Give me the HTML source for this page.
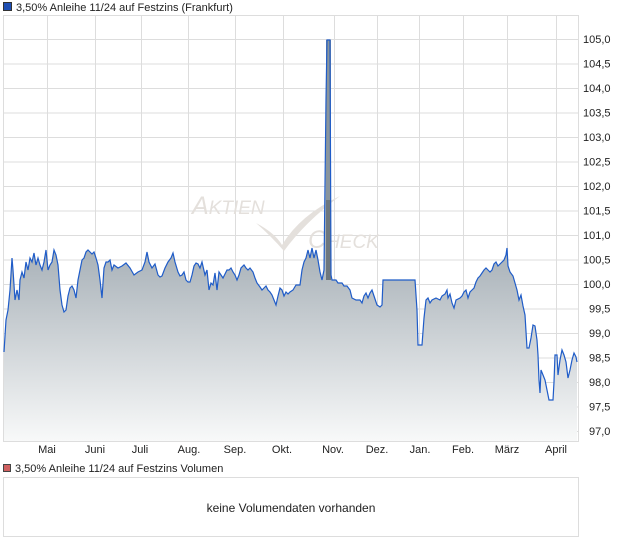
<!DOCTYPE html><html><head><meta charset="utf-8"><style>
body{margin:0;background:#fff;width:620px;height:546px;overflow:hidden;font-family:"Liberation Sans",sans-serif}
svg{position:absolute;left:0;top:0}
</style></head><body>
<svg width="620" height="546" xmlns="http://www.w3.org/2000/svg" font-family="Liberation Sans, sans-serif">
<defs>
<linearGradient id="f" x1="0" y1="250" x2="0" y2="441" gradientUnits="userSpaceOnUse"><stop offset="0" stop-color="#a8b1b8"/><stop offset="1" stop-color="#f8f9f9"/></linearGradient></defs>
<rect x="3.5" y="2.5" width="8" height="8" fill="#1f4fb4" stroke="#333" stroke-width="1"/>
<text x="16" y="11" font-size="11" fill="#222">3,50% Anleihe 11/24 auf Festzins (Frankfurt)</text>
<rect x="3.5" y="15.5" width="575" height="426" fill="#fff" stroke="#ddd"/>
<g stroke="#ddd" stroke-width="1">
<line x1="47.5" y1="16" x2="47.5" y2="441"/><line x1="95.5" y1="16" x2="95.5" y2="441"/><line x1="141.5" y1="16" x2="141.5" y2="441"/><line x1="188.5" y1="16" x2="188.5" y2="441"/><line x1="235.5" y1="16" x2="235.5" y2="441"/><line x1="283.5" y1="16" x2="283.5" y2="441"/><line x1="334.5" y1="16" x2="334.5" y2="441"/><line x1="377.5" y1="16" x2="377.5" y2="441"/><line x1="419.5" y1="16" x2="419.5" y2="441"/><line x1="463.5" y1="16" x2="463.5" y2="441"/><line x1="507.5" y1="16" x2="507.5" y2="441"/><line x1="556.5" y1="16" x2="556.5" y2="441"/>
<line x1="3" y1="39.5" x2="578" y2="39.5"/><line x1="3" y1="64" x2="578" y2="64"/><line x1="3" y1="88.5" x2="578" y2="88.5"/><line x1="3" y1="113" x2="578" y2="113"/><line x1="3" y1="137.5" x2="578" y2="137.5"/><line x1="3" y1="162" x2="578" y2="162"/><line x1="3" y1="186.5" x2="578" y2="186.5"/><line x1="3" y1="211" x2="578" y2="211"/><line x1="3" y1="235.5" x2="578" y2="235.5"/><line x1="3" y1="260" x2="578" y2="260"/><line x1="3" y1="284.5" x2="578" y2="284.5"/><line x1="3" y1="309" x2="578" y2="309"/><line x1="3" y1="333.5" x2="578" y2="333.5"/><line x1="3" y1="358" x2="578" y2="358"/><line x1="3" y1="382.5" x2="578" y2="382.5"/><line x1="3" y1="407" x2="578" y2="407"/><line x1="3" y1="431.5" x2="578" y2="431.5"/>
</g>
<g fill="#e4e0dc" font-style="italic">
<text x="192" y="214" font-size="25">A<tspan font-size="19">KTIEN</tspan></text>
<text x="308" y="248" font-size="25">C<tspan font-size="19">HECK</tspan></text>
<path d="M256 223 Q275 233 282 245 Q300 215 340 196 Q305 222 284 251 Q270 235 256 223Z"/>
</g>
<polygon fill="url(#f)" points="4,441 4,352 6,320 8,310 10,290 12,258 13,270 15,300 17,290 19,300 20,280 22,272 24,278 26,262 28,270 30,258 32,262 34,253 36,265 38,258 40,265 42,270 44,262 46,250 48,270 50,265 52,262 54,250 56,255 58,265 60,290 62,305 64,312 66,310 68,296 70,288 72,286 74,290 76,298 78,280 80,270 82,260 84,258 86,252 88,250 90,252 92,254 94,252 96,258 98,265 100,280 102,298 104,268 106,262 108,262 110,260 112,270 114,265 118,268 122,266 126,263 130,268 134,275 138,272 142,270 145,262 147,252 149,262 152,268 155,264 158,275 160,277 162,276 165,268 168,262 171,258 173,253 175,262 178,272 180,276 182,275 184,272 186,280 188,282 190,282 192,275 194,266 196,263 198,264 200,268 202,262 205,275 207,270 209,290 211,283 213,285 215,273 217,290 219,272 221,275 223,278 225,274 227,270 229,270 231,268 233,272 235,275 237,280 239,275 241,268 244,265 246,268 248,270 250,268 253,272 255,278 257,283 260,287 262,290 264,288 266,286 268,290 270,292 272,295 274,300 276,305 278,296 280,288 282,290 284,296 286,292 288,294 290,292 293,290 296,285 300,285 302,270 304,262 306,258 308,250 310,258 312,248 314,258 316,250 318,260 320,272 322,280 324,270 326,100 327,40 330,40 331,275 332,280 336,280 338,283 342,283 344,286 347,286 350,290 352,298 356,300 360,300 362,303 364,296 366,293 368,298 370,293 372,290 374,296 377,305 380,307 382,305 383,280 415,280 417,310 418,345 422,345 424,318 426,300 428,298 430,303 432,300 436,298 440,300 442,296 445,294 447,290 448,298 450,294 452,303 454,308 456,300 460,298 462,296 464,292 466,290 468,298 470,292 472,290 474,288 476,282 478,278 480,276 482,273 484,270 486,268 488,270 490,272 492,270 494,264 496,262 498,266 500,264 504,260 506,255 507,248 508,266 510,272 513,276 515,283 517,290 519,300 521,295 523,306 525,315 527,348 529,348 531,338 533,325 535,326 537,340 538,355 539,380 540,393 541,370 543,375 545,380 547,390 549,400 553,400 554,382 555,355 557,355 558,375 560,360 562,350 564,355 566,362 568,378 570,370 572,360 574,353 576,357 577,362 577,441"/>
<rect x="326" y="40" width="5" height="240" fill="#8a959c"/>
<rect x="326" y="200" width="5" height="80" fill="#6e777d"/>
<polyline fill="none" stroke="#1f5cc8" stroke-width="1.2" points="4,352 6,320 8,310 10,290 12,258 13,270 15,300 17,290 19,300 20,280 22,272 24,278 26,262 28,270 30,258 32,262 34,253 36,265 38,258 40,265 42,270 44,262 46,250 48,270 50,265 52,262 54,250 56,255 58,265 60,290 62,305 64,312 66,310 68,296 70,288 72,286 74,290 76,298 78,280 80,270 82,260 84,258 86,252 88,250 90,252 92,254 94,252 96,258 98,265 100,280 102,298 104,268 106,262 108,262 110,260 112,270 114,265 118,268 122,266 126,263 130,268 134,275 138,272 142,270 145,262 147,252 149,262 152,268 155,264 158,275 160,277 162,276 165,268 168,262 171,258 173,253 175,262 178,272 180,276 182,275 184,272 186,280 188,282 190,282 192,275 194,266 196,263 198,264 200,268 202,262 205,275 207,270 209,290 211,283 213,285 215,273 217,290 219,272 221,275 223,278 225,274 227,270 229,270 231,268 233,272 235,275 237,280 239,275 241,268 244,265 246,268 248,270 250,268 253,272 255,278 257,283 260,287 262,290 264,288 266,286 268,290 270,292 272,295 274,300 276,305 278,296 280,288 282,290 284,296 286,292 288,294 290,292 293,290 296,285 300,285 302,270 304,262 306,258 308,250 310,258 312,248 314,258 316,250 318,260 320,272 322,280 324,270 326,100 327,40 330,40 331,275 332,280 336,280 338,283 342,283 344,286 347,286 350,290 352,298 356,300 360,300 362,303 364,296 366,293 368,298 370,293 372,290 374,296 377,305 380,307 382,305 383,280 415,280 417,310 418,345 422,345 424,318 426,300 428,298 430,303 432,300 436,298 440,300 442,296 445,294 447,290 448,298 450,294 452,303 454,308 456,300 460,298 462,296 464,292 466,290 468,298 470,292 472,290 474,288 476,282 478,278 480,276 482,273 484,270 486,268 488,270 490,272 492,270 494,264 496,262 498,266 500,264 504,260 506,255 507,248 508,266 510,272 513,276 515,283 517,290 519,300 521,295 523,306 525,315 527,348 529,348 531,338 533,325 535,326 537,340 538,355 539,380 540,393 541,370 543,375 545,380 547,390 549,400 553,400 554,382 555,355 557,355 558,375 560,360 562,350 564,355 566,362 568,378 570,370 572,360 574,353 576,357 577,362"/>
<g font-size="11" fill="#222">
<text x="583" y="43">105,0</text><text x="583" y="67.5">104,5</text><text x="583" y="92">104,0</text><text x="583" y="116.5">103,5</text><text x="583" y="141">103,0</text><text x="583" y="165.5">102,5</text><text x="583" y="190">102,0</text><text x="583" y="214.5">101,5</text><text x="583" y="239">101,0</text><text x="583" y="263.5">100,5</text><text x="583" y="288">100,0</text><text x="589" y="312.5">99,5</text><text x="589" y="337">99,0</text><text x="589" y="361.5">98,5</text><text x="589" y="386">98,0</text><text x="589" y="410.5">97,5</text><text x="589" y="435">97,0</text>
</g>
<g font-size="11" fill="#222" text-anchor="middle">
<text x="47" y="453">Mai</text><text x="95" y="453">Juni</text><text x="140" y="453">Juli</text><text x="189" y="453">Aug.</text><text x="235" y="453">Sep.</text><text x="282" y="453">Okt.</text><text x="333" y="453">Nov.</text><text x="377" y="453">Dez.</text><text x="420" y="453">Jan.</text><text x="463" y="453">Feb.</text><text x="507" y="453">März</text><text x="556" y="453">April</text>
</g>
<rect x="3.5" y="464.5" width="7" height="7" fill="#d06060" stroke="#444"/>
<text x="15" y="472" font-size="11" fill="#222">3,50% Anleihe 11/24 auf Festzins Volumen</text>
<rect x="3.5" y="477.5" width="575" height="59" fill="#fff" stroke="#ddd"/>
<text x="291" y="512" font-size="12" fill="#222" text-anchor="middle">keine Volumendaten vorhanden</text>
</svg>
</body></html>
